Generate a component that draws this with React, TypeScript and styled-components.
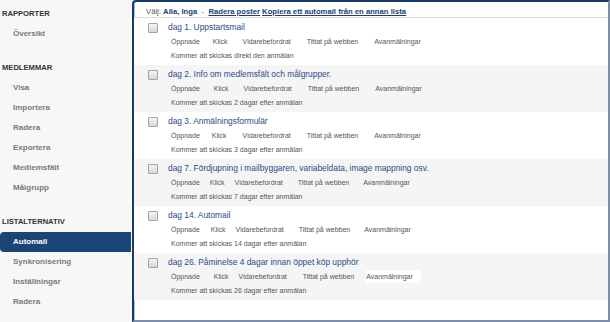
import React from "react";
import styled, { createGlobalStyle } from "styled-components";

const Global = createGlobalStyle`
  html, body { margin: 0; padding: 0; background: #ffffff; }
  body { width: 610px; height: 322px; overflow: hidden; font-family: "Liberation Sans", Arial, sans-serif; }
  #root { width: 610px; height: 322px; }
`;

const Page = styled.div`
  display: flex;
  width: 610px;
  height: 322px;
  background: #f7f7f7;
`;

const Sidebar = styled.nav`
  width: 132px;
  flex: none;
  padding-top: 4px;
  display: flex;
  flex-direction: column;
`;

const Section = styled.div`
  display: flex;
  flex-direction: column;
  & + & { margin-top: 14px; }
`;

const SectionTitle = styled.div`
  height: 20px;
  line-height: 20px;
  padding-left: 2px;
  font-size: 7.6px;
  font-weight: bold;
  color: #333333;
`;

const NavItem = styled.div<{ $active?: boolean }>`
  height: 20px;
  line-height: 20px;
  padding-left: 13px;
  margin-right: 1px;
  font-size: 8px;
  font-weight: bold;
  color: ${(p) => (p.$active ? "#ffffff" : "#7a7a7a")};
  background: ${(p) => (p.$active ? "#1b4577" : "transparent")};
  border-radius: ${(p) => (p.$active ? "4px 0 0 4px" : "0")};
`;

const Main = styled.main`
  flex: 1;
  display: flex;
  flex-direction: column;
  background: #ffffff;
  border-top: 2px solid #173b69;
  border-left: 2px solid #173b69;
  border-right: 2px solid #7f8ca6;
  border-bottom: 2px solid #7d8fb0;
  border-top-left-radius: 4px;
  box-shadow: inset 1px 0 0 #aebfd8;
`;

const Toolbar = styled.div`
  height: 15px;
  line-height: 19px;
  padding-left: 12px;
  border-bottom: 1px solid #dddddd;
  font-size: 7.7px;
  color: #555555;
  white-space: nowrap;
  overflow: hidden;
`;

const Strong = styled.span`
  font-weight: bold;
  color: #213f73;
`;

const ToolLink = styled.a`
  font-weight: bold;
  color: #213f73;
  text-decoration: underline;
  margin-right: 2px;
`;

const Row = styled.div<{ $alt?: boolean }>`
  display: flex;
  height: 47px;
  box-sizing: border-box;
  padding: 4px 0 4px 14px;
  background: ${(p) => (p.$alt ? "#f5f5f5" : "#ffffff")};
`;

const Check = styled.span`
  width: 8px;
  height: 8px;
  margin-top: 1px;
  margin-right: 10px;
  flex: none;
  border: 1px solid #a3a3a3;
  border-radius: 1px;
  background: linear-gradient(#f4f4f4, #d9d9d9);
`;

const Body = styled.div`
  display: flex;
  flex-direction: column;
`;

const Title = styled.div`
  height: 13px;
  line-height: 11px;
  font-size: 8.4px;
  color: #2b4b8a;
  white-space: nowrap;
`;

const Stats = styled.div`
  display: flex;
  height: 13px;
  line-height: 13px;
  padding-left: 3px;
  font-size: 7px;
  color: #555555;
  white-space: nowrap;
`;

const Stat = styled.span<{ $gap: number; $boxed?: boolean }>`
  margin-right: ${(p) => p.$gap}px;
  background: ${(p) => (p.$boxed ? "#ffffff" : "transparent")};
  padding-right: ${(p) => (p.$boxed ? "8px" : "0")};
`;

const When = styled.div`
  height: 13px;
  line-height: 15px;
  padding-left: 3px;
  font-size: 7px;
  color: #555555;
  white-space: nowrap;
`;

const statNames = ["Öppnade", "Klick", "Vidarebefordrat", "Tittat på webben", "Avanmälningar"];

const mails = [
  { title: "dag 1. Uppstartsmail", gaps: [13, 15, 16, 16, 0], when: "Kommer att skickas direkt den anmälan" },
  { title: "dag 2. Info om medlemsfält och målgrupper.", gaps: [14, 15, 16, 16, 0], when: "Kommer att skickas 2 dagar efter anmälan" },
  { title: "dag 3. Anmälningsformulär", gaps: [12, 16, 16, 16, 0], when: "Kommer att skickas 3 dagar efter anmälan" },
  { title: "dag 7. Fördjupning i mailbyggaren, variabeldata, image mappning osv.", gaps: [10, 10, 15, 14, 0], when: "Kommer att skickas 7 dagar efter anmälan" },
  { title: "dag 14. Automail", gaps: [11, 10, 15, 14, 0], when: "Kommer att skickas 14 dagar efter anmälan" },
  { title: "dag 26. Påminelse 4 dagar innan öppet köp upphör", gaps: [14, 10, 16, 12, 0], when: "Kommer att skickas 26 dagar efter anmälan", boxed: true },
];

const nav = [
  { title: "RAPPORTER", items: ["Översikt"] },
  { title: "MEDLEMMAR", items: ["Visa", "Importera", "Radera", "Exportera", "Medlemsfält", "Målgrupp"] },
  { title: "LISTALTERNATIV", items: ["Automail", "Synkronisering", "Inställningar", "Radera"] },
];

export default function App() {
  return (
    <>
      <Global />
      <Page>
        <Sidebar>
          {nav.map((s) => (
            <Section key={s.title}>
              <SectionTitle>{s.title}</SectionTitle>
              {s.items.map((i) => (
                <NavItem key={i} $active={i === "Automail"}>
                  {i}
                </NavItem>
              ))}
            </Section>
          ))}
        </Sidebar>
        <Main>
          <Toolbar>
            Välj: <Strong>Alla, Inga</Strong>&nbsp;&nbsp;-&nbsp;&nbsp;
            <ToolLink>Radera poster</ToolLink>
            <ToolLink>Kopiera ett automail från en annan lista</ToolLink>
          </Toolbar>
          {mails.map((m, idx) => (
            <Row key={m.title} $alt={idx % 2 === 1}>
              <Check />
              <Body>
                <Title>{m.title}</Title>
                <Stats>
                  {statNames.map((n, i) => (
                    <Stat key={n} $gap={m.gaps[i]} $boxed={m.boxed && i === 4}>
                      {n}
                    </Stat>
                  ))}
                </Stats>
                <When>{m.when}</When>
              </Body>
            </Row>
          ))}
        </Main>
      </Page>
    </>
  );
}
